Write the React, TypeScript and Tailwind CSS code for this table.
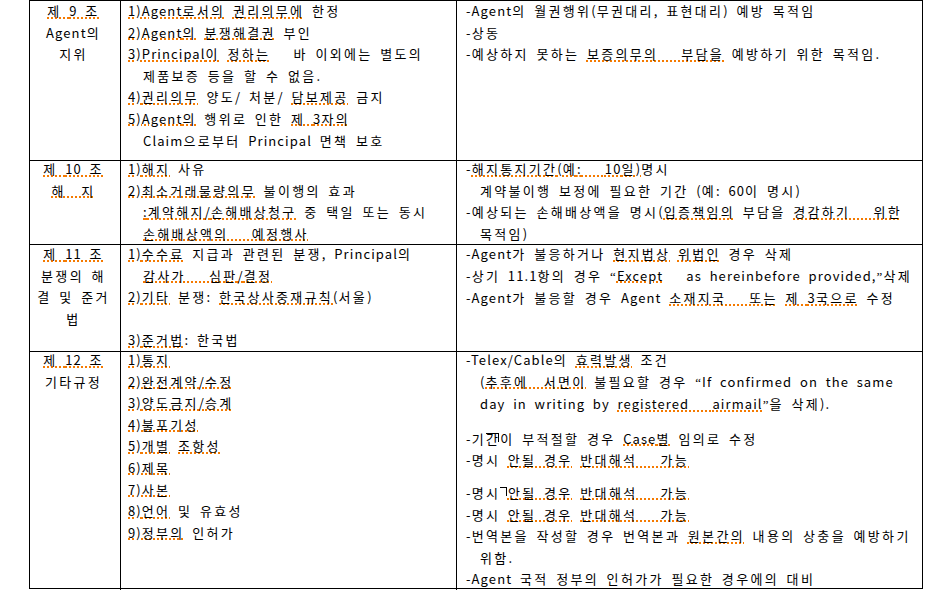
import type { ReactNode } from "react";

// ~text~ marks a word with a spelling squiggle, [x] marks a stray frame stroke
type Line = string | { text: string; indent?: boolean } | { gap: number };

interface Row {
  height: string;
  shift: string;
  article: string[];
  clauses: Line[];
  notes: Line[];
}

const rows: Row[] = [
  {
    height: "h-[160px]",
    shift: "-mt-[1px]",
    article: ["~제 9 조~", "Agent의", "지위"],
    clauses: [
      "~1)Agent로서의~ ~권리의무에~ 한정",
      "~2)Agent의~ ~분쟁해결권~ 부인",
      "~3)Principal이~ ~정하는~   바 이외에는 별도의",
      { text: "제품보증 등을 할 수 없음.", indent: true },
      "~4)권리의무~ 양도/ 처분/ ~담보제공~ 금지",
      "~5)Agent의~ 행위로 인한 ~제 3자의~",
      { text: "Claim으로부터 Principal 면책 보호", indent: true },
    ],
    notes: [
      "-Agent의 월권행위(무권대리, 표현대리) 예방 목적임",
      "-상동",
      "-예상하지 못하는 ~보증의무의   부담을~ 예방하기 위한 목적임.",
    ],
  },
  {
    height: "h-[84px]",
    shift: "-mt-[3px]",
    article: ["~제 10 조~", "~해  지~"],
    clauses: [
      "~1)해지~ 사유",
      "~2)최소거래물량의무~ 불이행의 효과",
      { text: "~:계약해지/손해배상청구~ 중 택일 또는 동시", indent: true },
      { text: "~손해배상액의   예정행사~", indent: true },
    ],
    notes: [
      "-~해지통지기간(예:   10일)~명시",
      { text: "계약불이행 보정에 필요한 기간 (예: 60이 명시)", indent: true },
      "-예상되는 손해배상액을 명시(~입증책임의~ 부담을 ~경감하기   위한~",
      { text: "목적임)", indent: true },
    ],
  },
  {
    height: "h-[107px]",
    shift: "-mt-[2px]",
    article: ["~제 11 조~", "분쟁의 해", "결 및 준거", "법"],
    clauses: [
      "~1)수수료~ 지급과 관련된 분쟁, Principal의",
      { text: "~감사가   심판/결정~", indent: true },
      "~2)기타~ 분쟁: ~한국상사중재규칙~(서울)",
      { gap: 21.6 },
      "~3)준거법~: 한국법",
    ],
    notes: [
      "-Agent가 불응하거나 ~현지법상~ ~위법인~ 경우 삭제",
      "-상기 11.1항의 경우 “~Except~   as hereinbefore provided,”삭제",
      "-Agent가 불응할 경우 Agent ~소재지국   또는~ ~제 3국으로~ 수정",
    ],
  },
  {
    height: "h-[237px]",
    shift: "-mt-[3px]",
    article: ["~제 12 조~", "기타규정"],
    clauses: [
      "~1)통지~",
      "~2)완전계약/수정~",
      "~3)양도금지/승계~",
      "~4)불포기성~",
      "~5)개별~ ~조항성~",
      "~6)제목~",
      "~7)사본~",
      "~8)언어~ 및 유효성",
      "~9)정부의~ 인허가",
    ],
    notes: [
      "-Telex/Cable의 ~효력발생~ 조건",
      { text: "(~추후에  서면이~ 불필요할 경우 “If confirmed on the same", indent: true },
      { text: "day in writing by ~registered   airmail~”을 삭제).", indent: true },
      { gap: 12 },
      "-기[간]이 부적절할 경우 ~Case별~ 임의로 수정",
      "-명시 ~안될 경우~ ~반대해석   가능~",
      { gap: 11 },
      "-명시[ ]~안될 경우~ ~반대해석   가능~",
      "-명시 ~안될 경우~ ~반대해석   가능~",
      "-번역본을 작성할 경우 번역본과 ~원본간의~ 내용의 상충을 예방하기",
      { text: "위함.", indent: true },
      "-Agent 국적 정부의 인허가가 필요한 경우에의 대비",
    ],
  },
];

// latin runs are set tighter than hangul, as in the half-width original
function renderRuns(text: string, key: string): ReactNode[] {
  return text.split(/([!-~]+)/).map((run, i) =>
    /^[!-~]+$/.test(run) ? (
      <span key={`${key}-${i}`} className="tracking-[1.1px]">
        {run}
      </span>
    ) : (
      run
    )
  );
}

function renderPlain(text: string, key: string): ReactNode[] {
  return text.split(/(\[[^\]]*\]|[“”])/).map((part, i) => {
    if (!part) return null;
    const k = `${key}-${i}`;
    if (part === "“" || part === "”") {
      return (
        <span key={k} className="font-['Liberation_Serif',serif] tracking-[1.1px]">
          {part}
        </span>
      );
    }
    if (part.startsWith("[")) {
      return (
        <span key={k} className="relative">
          {part.slice(1, -1)}
          <span className="absolute left-0 right-[1px] top-[4px] h-[9px] border-t border-r border-black" />
        </span>
      );
    }
    return <span key={k}>{renderRuns(part, k)}</span>;
  });
}

function Text({ text }: { text: string }) {
  const parts = text.split("~");
  return (
    <>
      {parts.map((part, i) =>
        i % 2 === 1 ? (
          <span
            key={i}
            className="underline decoration-dotted decoration-[#f57a00] decoration-2 underline-offset-[1px]"
          >
            {renderPlain(part, `u${i}`)}
          </span>
        ) : (
          <span key={i}>{renderPlain(part, `p${i}`)}</span>
        )
      )}
    </>
  );
}

function Lines({ lines, indent }: { lines: Line[]; indent: string }) {
  return (
    <>
      {lines.map((line, i) => {
        if (typeof line === "object" && "gap" in line) {
          return <div key={i} style={{ height: line.gap }} />;
        }
        const text = typeof line === "string" ? line : line.text;
        const indented = typeof line === "object" && line.indent;
        return (
          <div key={i} className={indented ? indent : ""}>
            <Text text={text} />
          </div>
        );
      })}
    </>
  );
}

export default function App() {
  return (
    <div className="h-[590px] w-[949px] overflow-hidden bg-white text-black">
      <div className="ml-[29px] w-[894px] border-x border-t border-black font-['Noto_Sans_CJK_KR',sans-serif] text-[13px] leading-[21.6px] tracking-[2.3px] whitespace-pre [word-spacing:2.5px]">
        {rows.map((row, r) => (
          <div key={r} className={`grid grid-cols-[91px_336px_465px] border-b border-black ${row.height}`}>
            <div className="border-r border-black pr-[3px] text-center">
              <div className={row.shift}>
                {row.article.map((a, i) => (
                  <div key={i}>
                    <Text text={a} />
                  </div>
                ))}
              </div>
            </div>
            <div className="border-r border-black pl-[7px]">
              <div className={row.shift}>
                <Lines lines={row.clauses} indent="pl-[15px]" />
              </div>
            </div>
            <div className="pl-[9px]">
              <div className={row.shift}>
                <Lines lines={row.notes} indent="pl-[14px]" />
              </div>
            </div>
          </div>
        ))}
      </div>
    </div>
  );
}
